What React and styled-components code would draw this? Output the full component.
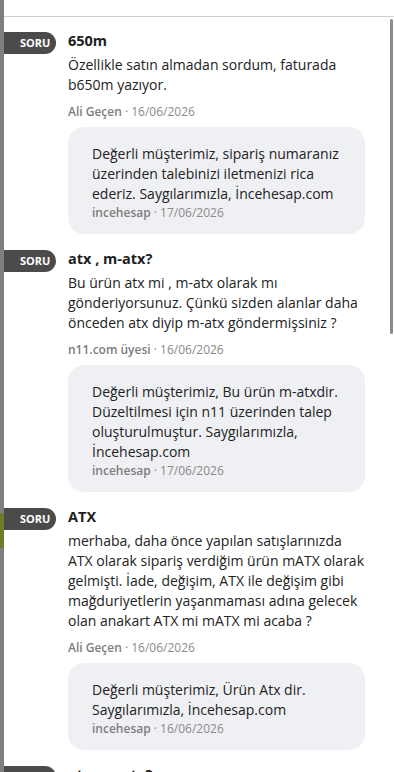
import React from "react";
import styled, { createGlobalStyle } from "styled-components";

const GlobalStyle = createGlobalStyle`
  html, body {
    margin: 0;
    padding: 0;
    height: 100%;
    overflow: hidden;
    background: #7f7f7f;
  }
  * { box-sizing: border-box; }
`;

const questions = [
  {
    title: "650m",
    text: "Özellikle satın almadan sordum, faturada b650m yazıyor.",
    author: "Ali Geçen",
    date: "16/06/2026",
    answer:
      "Değerli müşterimiz, sipariş numaranız üzerinden talebinizi iletmenizi rica ederiz. Saygılarımızla, İncehesap.com",
    answerDate: "17/06/2026",
  },
  {
    title: "atx , m-atx?",
    text: "Bu ürün atx mi , m-atx olarak mı gönderiyorsunuz. Çünkü sizden alanlar daha önceden atx diyip m-atx göndermişsiniz ?",
    author: "n11.com üyesi",
    date: "16/06/2026",
    answer:
      "Değerli müşterimiz, Bu ürün m-atxdir. Düzeltilmesi için n11 üzerinden talep oluşturulmuştur. Saygılarımızla, İncehesap.com",
    answerDate: "17/06/2026",
  },
  {
    title: "ATX",
    text: "merhaba, daha önce yapılan satışlarınızda ATX olarak sipariş verdiğim ürün mATX olarak gelmişti. İade, değişim, ATX ile değişim gibi mağduriyetlerin yaşanmaması adına gelecek olan anakart ATX mi mATX mi acaba ?",
    author: "Ali Geçen",
    date: "16/06/2026",
    answer: "Değerli müşterimiz, Ürün Atx dir. Saygılarımızla, İncehesap.com",
    answerDate: "16/06/2026",
  },
  {
    title: "atx , m-atx?",
    text: "Ürün ATX mi yoksa m-ATX mi, kutu üzerinde hangisi yazıyor?",
    author: "n11.com üyesi",
    date: "15/06/2026",
    answer: "Değerli müşterimiz, Ürün m-atx dir. Saygılarımızla, İncehesap.com",
    answerDate: "15/06/2026",
  },
];

const App = () => {
  return (
    <>
      <GlobalStyle />
      <Screen>
        <Backdrop>
          <Olive />
        </Backdrop>
        <Sheet>
          <SheetHeader />
          <List>
            {questions.map((q, i) => (
              <Item key={i}>
                <Badge>SORU</Badge>
                <Content>
                  <Title>{q.title}</Title>
                  <Body>{q.text}</Body>
                  <Meta>
                    <strong>{q.author}</strong> · {q.date}
                  </Meta>
                  <Answer>
                    <AnswerText>{q.answer}</AnswerText>
                    <Meta $tight>
                      <strong>incehesap</strong> · {q.answerDate}
                    </Meta>
                  </Answer>
                </Content>
              </Item>
            ))}
            <Thumb />
          </List>
        </Sheet>
      </Screen>
    </>
  );
};

const Screen = styled.div`
  width: 394px;
  height: 772px;
  display: flex;
  overflow: hidden;
  font-family: "Open Sans", "Noto Sans", sans-serif;
`;

const Backdrop = styled.div`
  width: 4px;
  flex-shrink: 0;
  background: #7f7f7f;
  padding-top: 513px;
`;

const Olive = styled.div`
  height: 35px;
  background: #6f7a2c;
`;

const Sheet = styled.div`
  flex: 1;
  background: #fff;
  display: flex;
  flex-direction: column;
  min-width: 0;
`;

const SheetHeader = styled.div`
  height: 17px;
  flex-shrink: 0;
  border-bottom: 1px solid #cfcfcf;
`;

const List = styled.div`
  position: relative;
  flex: 1;
  overflow: hidden;
  padding: 15px 29px 0 0;
  display: flex;
  flex-direction: column;
  gap: 16px;
`;

const Thumb = styled.div`
  position: absolute;
  top: 2px;
  right: 1px;
  width: 3px;
  height: 315px;
  border-radius: 2px;
  background: #8c8c8c;
`;

const Item = styled.div`
  display: flex;
  align-items: flex-start;
  gap: 12px;
`;

const Badge = styled.div`
  width: 52px;
  height: 22px;
  flex-shrink: 0;
  background: #4b4b4b;
  color: #fff;
  border-radius: 0 11px 11px 0;
  font-size: 11px;
  font-weight: 700;
  line-height: 22px;
  padding-left: 16px;
`;

const Content = styled.div`
  flex: 1;
  min-width: 0;
  display: flex;
  flex-direction: column;
`;

const Title = styled.div`
  font-size: 14.5px;
  font-weight: 700;
  line-height: 18px;
  color: #1e1e1e;
`;

const Body = styled.div`
  margin-top: 5px;
  font-size: 14px;
  line-height: 20px;
  color: #222;
`;

const Meta = styled.div`
  margin-top: ${(p) => (p.$tight ? "0" : "8px")};
  font-size: 12px;
  line-height: 18px;
  color: #8a8a8a;
  strong {
    font-weight: 600;
    color: #7d7d7d;
  }
`;

const Answer = styled.div`
  margin-top: 6px;
  background: #eff0f3;
  border-radius: 16px;
  padding: 17px 22px 12px 24px;
`;

const AnswerText = styled.div`
  font-size: 14px;
  line-height: 20px;
  color: #222;
`;

export default App;
